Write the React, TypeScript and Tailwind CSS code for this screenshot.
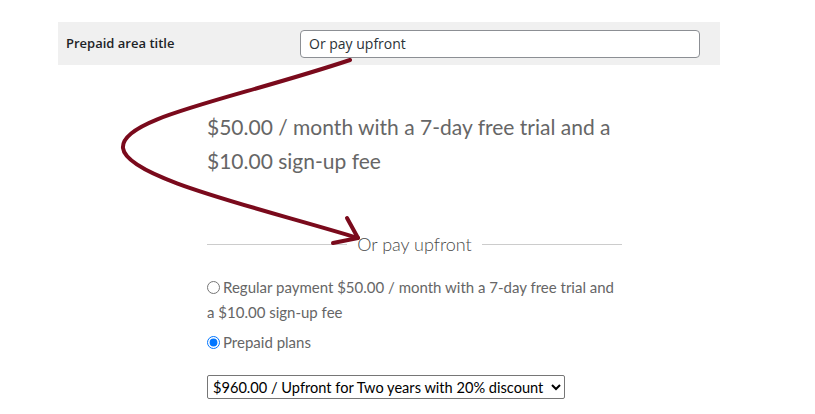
import React, { useState } from 'react';

function App() {
  const [plan, setPlan] = useState<'regular' | 'prepaid'>('prepaid');

  return (
    <div className="relative w-[815px] h-[414px] bg-white overflow-hidden">
      <div className="pt-[22px] pl-[58px]">
        <div className="w-[662px] h-[43px] bg-[#f0f0f0] flex items-center">
          <label className="w-[242px] pl-[8px] text-[13px] font-semibold text-[#1d2327] font-['Open_Sans',sans-serif]">
            Prepaid area title
          </label>
          <input
            defaultValue="Or pay upfront"
            className="w-[400px] h-[28px] px-[8px] bg-white border border-[#8c8f94] rounded-[4px] text-[14px] text-[#2c3338] font-['Open_Sans',sans-serif] outline-none"
          />
        </div>
      </div>

      <div className="pl-[207px] w-[622px] font-['Lato',sans-serif]">
        <p className="mt-[45px] text-[21px] leading-[34px] text-[#666666]">
          $50.00 / month with a 7-day free trial and a
          <br />
          $10.00 sign-up fee
        </p>

        <div className="mt-[54px] flex items-center gap-[10px]">
          <div className="flex-1 h-px bg-[#cccccc]" />
          <span className="text-[18px] font-light text-[#4a4a4a] leading-[24px]">Or pay upfront</span>
          <div className="flex-1 h-px bg-[#cccccc]" />
        </div>

        <div className="mt-[19px] text-[15px] leading-[25px] text-[#666666]">
          <label className="block">
            <input
              type="radio"
              name="plan"
              checked={plan === 'regular'}
              onChange={() => setPlan('regular')}
              className="w-[13px] h-[13px] mr-[3px] align-[-1px]"
            />
            Regular payment $50.00 / month with a 7-day free trial and
            <br />a $10.00 sign-up fee
          </label>
          <label className="block mt-[5px]">
            <input
              type="radio"
              name="plan"
              checked={plan === 'prepaid'}
              onChange={() => setPlan('prepaid')}
              className="w-[13px] h-[13px] mr-[3px] align-[-1px]"
            />
            Prepaid plans
          </label>
          <select className="mt-[20px] h-[24px] w-[358px] border border-[#767676] rounded-[2px] text-[14.6px] text-black bg-white pl-[1px]">
            <option>$960.00 / Upfront for Two years with 20% discount</option>
          </select>
        </div>
      </div>

      <svg
        className="absolute inset-0 pointer-events-none"
        width="815"
        height="414"
        viewBox="0 0 815 414"
        fill="none"
      >
        <path
          d="M350 60 C230 100 120 118 123 148 C126 178 260 208 358 238"
          stroke="#7a0a1c"
          strokeWidth="4"
          strokeLinecap="round"
        />
        <path
          d="M347 218 L358 238 L333 243"
          stroke="#7a0a1c"
          strokeWidth="4"
          strokeLinecap="round"
          strokeLinejoin="round"
        />
      </svg>
    </div>
  );
}

export default App;
